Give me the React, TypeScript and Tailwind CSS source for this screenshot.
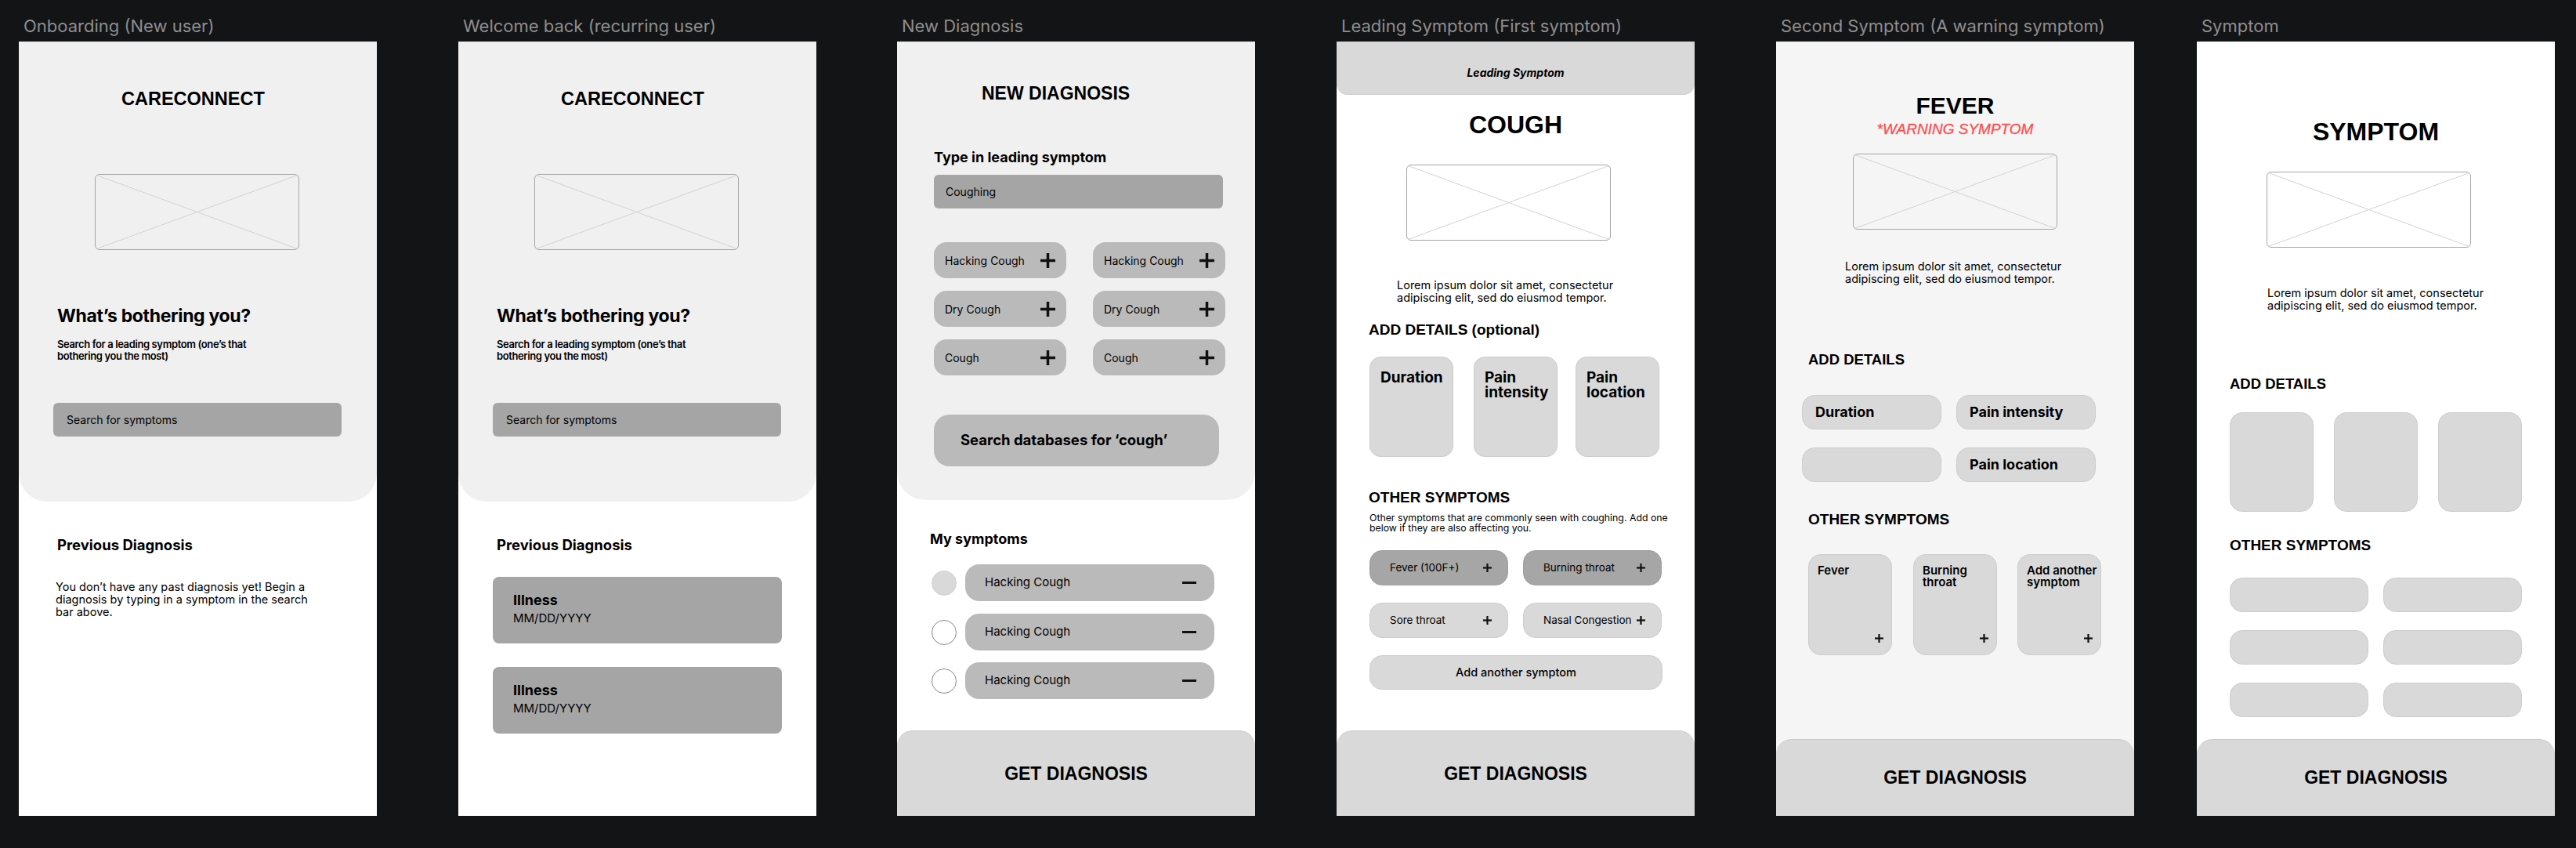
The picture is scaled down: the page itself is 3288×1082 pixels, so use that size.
import React from "react";

function Placeholder() {
  return (
    <div className="w-[261px] h-[97px] rounded-[6px] border border-[#a6a6a6] overflow-hidden">
      <svg className="block w-full h-full" viewBox="0 0 100 100" preserveAspectRatio="none">
        <line x1="0" y1="0" x2="100" y2="100" stroke="#d2d2d2" strokeWidth="1" vectorEffect="non-scaling-stroke" />
        <line x1="100" y1="0" x2="0" y2="100" stroke="#d2d2d2" strokeWidth="1" vectorEffect="non-scaling-stroke" />
      </svg>
    </div>
  );
}

function BigPlus() {
  return (
    <svg width="19" height="19" viewBox="0 0 19 19" className="shrink-0">
      <rect x="7.75" y="0" width="3.5" height="19" fill="#111" />
      <rect x="0" y="7.75" width="19" height="3.5" fill="#111" />
    </svg>
  );
}

function SmallPlus() {
  return (
    <svg width="11" height="11" viewBox="0 0 11 11" className="shrink-0">
      <rect x="4.4" y="0" width="2.2" height="11" fill="#111" />
      <rect x="0" y="4.4" width="11" height="2.2" fill="#111" />
    </svg>
  );
}

function Minus() {
  return (
    <svg width="18" height="3" viewBox="0 0 18 3" className="shrink-0">
      <rect x="0" y="0" width="18" height="3" fill="#111" />
    </svg>
  );
}

function Column({ label, ml, children }: { label: string; ml: string; children: React.ReactNode }) {
  return (
    <div className={"flex flex-col w-[457px] shrink-0 " + ml}>
      <div className="h-[31px] pl-[6px] text-[22px] leading-[23px] text-[#8e8e8e] whitespace-nowrap">{label}</div>
      {children}
    </div>
  );
}

function GetDiagnosis({ h }: { h: string }) {
  return (
    <div className={"mt-auto w-full rounded-t-[20px] bg-[#d9d9d9] border-t border-[#c9c9c9] flex items-center justify-center font-['Liberation_Sans',Arial,sans-serif] font-bold text-[23px] leading-none text-black " + h}>
      GET DIAGNOSIS
    </div>
  );
}

function HomeTop() {
  return (
    <div className="h-[587px] shrink-0 bg-[#f0f0f0] rounded-b-[36px] flex flex-col">
      <div className="mt-[62px] pl-[131px] font-['Liberation_Sans',Arial,sans-serif] font-bold text-[23.5px] leading-none text-black">CARECONNECT</div>
      <div className="mt-[83px] ml-[97px]">
        <Placeholder />
      </div>
      <div className="mt-[73px] ml-[49px] text-[23px] leading-none font-bold tracking-[-0.015em] text-black">What’s bothering you?</div>
      <div className="mt-[17px] ml-[49px] text-[13px] leading-[15px] font-semibold tracking-[-0.03em] text-black whitespace-nowrap">
        Search for a leading symptom (one’s that
        <br />
        bothering you the most)
      </div>
      <div className="mt-[52px] ml-[44px] w-[368px] h-[43px] rounded-[6px] bg-[#a5a5a5] flex items-center pl-[17px] text-[14px] text-black">Search for symptoms</div>
    </div>
  );
}

function Frame1() {
  return (
    <div className="w-[457px] h-[988px] bg-white flex flex-col">
      <HomeTop />
      <div className="mt-[46px] ml-[49px] text-[18.5px] leading-none font-bold text-black">Previous Diagnosis</div>
      <div className="mt-[36px] ml-[47px] text-[14.5px] leading-[16px] text-black whitespace-nowrap">
        You don’t have any past diagnosis yet! Begin a
        <br />
        diagnosis by typing in a symptom in the search
        <br />
        bar above.
      </div>
    </div>
  );
}

function IllnessCard({ mt }: { mt: string }) {
  return (
    <div className={"ml-[44px] w-[369px] h-[85px] rounded-[8px] bg-[#a5a5a5] flex flex-col pl-[26px] pt-[21px] " + mt}>
      <div className="text-[18px] leading-none font-bold text-black">Illness</div>
      <div className="mt-[6px] text-[15px] leading-none text-black">MM/DD/YYYY</div>
    </div>
  );
}

function Frame2() {
  return (
    <div className="w-[457px] h-[988px] bg-white flex flex-col">
      <HomeTop />
      <div className="mt-[46px] ml-[49px] text-[18.5px] leading-none font-bold text-black">Previous Diagnosis</div>
      <IllnessCard mt="mt-[31px]" />
      <IllnessCard mt="mt-[30px]" />
    </div>
  );
}

function Chip({ label }: { label: string }) {
  return (
    <div className="w-[169px] h-[46px] rounded-[16px] bg-[#bababa] flex items-center justify-between pl-[14px] pr-[14px] text-[14px] text-black">
      <span>{label}</span>
      <BigPlus />
    </div>
  );
}

function SymptomRow({ filled, mt }: { filled: boolean; mt: string }) {
  return (
    <div className={"flex items-center ml-[44px] " + mt}>
      <div className={filled ? "w-[32px] h-[32px] rounded-full bg-[#d9d9d9] border border-[#d0d0d0]" : "w-[32px] h-[32px] rounded-full bg-white border border-[#8a8a8a]"} />
      <div className="ml-[11px] w-[318px] h-[47px] rounded-[18px] bg-[#bababa] flex items-center justify-between pl-[25px] pr-[23px] text-[15px] text-black">
        <span>Hacking Cough</span>
        <Minus />
      </div>
    </div>
  );
}

function Frame3() {
  return (
    <div className="w-[457px] h-[988px] bg-white flex flex-col">
      <div className="h-[585px] shrink-0 bg-[#f0f0f0] rounded-b-[36px] flex flex-col">
        <div className="mt-[55px] pl-[108px] font-['Liberation_Sans',Arial,sans-serif] font-bold text-[23px] leading-none text-black">NEW DIAGNOSIS</div>
        <div className="mt-[61px] ml-[47px] text-[18px] leading-none font-bold text-black">Type in leading symptom</div>
        <div className="mt-[13px] ml-[47px] w-[369px] h-[43px] rounded-[6px] bg-[#a5a5a5] flex items-center pl-[15px] text-[14px] text-black">Coughing</div>
        <div className="mt-[43px] ml-[47px] flex flex-col gap-[16px]">
          <div className="flex gap-[34px]">
            <Chip label="Hacking Cough" />
            <Chip label="Hacking Cough" />
          </div>
          <div className="flex gap-[34px]">
            <Chip label="Dry Cough" />
            <Chip label="Dry Cough" />
          </div>
          <div className="flex gap-[34px]">
            <Chip label="Cough" />
            <Chip label="Cough" />
          </div>
        </div>
        <div className="mt-[50px] ml-[47px] w-[364px] h-[66px] rounded-[20px] bg-[#bababa] flex items-center pl-[34px] text-[18.5px] font-bold text-black">Search databases for ‘cough’</div>
      </div>
      <div className="mt-[41px] ml-[42px] text-[18px] leading-none font-bold text-black">My symptoms</div>
      <SymptomRow filled mt="mt-[23px]" />
      <SymptomRow filled={false} mt="mt-[16px]" />
      <SymptomRow filled={false} mt="mt-[15px]" />
      <GetDiagnosis h="h-[109px]" />
    </div>
  );
}

function DetailCard({ text, ml }: { text: React.ReactNode; ml: string }) {
  return (
    <div className={"w-[107px] h-[128px] rounded-[14px] bg-[#d9d9d9] border border-[#cdcdcd] pl-[13px] pt-[16px] text-[19px] leading-[19px] font-bold text-black " + ml}>{text}</div>
  );
}

function OtherChip({ label, dark }: { label: string; dark: boolean }) {
  return (
    <div className={dark ? "w-[177px] h-[45px] rounded-[16px] bg-[#a6a6a6] border border-[#9e9e9e] flex items-center justify-between pl-[25px] pr-[20px] text-[13.5px] text-black" : "w-[177px] h-[45px] rounded-[16px] bg-[#d9d9d9] border border-[#cdcdcd] flex items-center justify-between pl-[25px] pr-[20px] text-[13.5px] text-black"}>
      <span className="whitespace-nowrap">{label}</span>
      <SmallPlus />
    </div>
  );
}

function Frame4() {
  return (
    <div className="w-[457px] h-[988px] bg-white flex flex-col">
      <div className="h-[68px] shrink-0 bg-[#d9d9d9] rounded-b-[14px] border-b border-[#cdcdcd] flex items-center justify-center pt-[12px] text-[14px] font-bold italic text-black">Leading Symptom</div>
      <div className="mt-[22px] text-center font-['Liberation_Sans',Arial,sans-serif] font-bold text-[32px] leading-none text-black">COUGH</div>
      <div className="mt-[35px] ml-[89px]">
        <Placeholder />
      </div>
      <div className="mt-[49px] ml-[77px] text-[14.5px] leading-[16px] text-black whitespace-nowrap">
        Lorem ipsum dolor sit amet, consectetur
        <br />
        adipiscing elit, sed do eiusmod tempor.
      </div>
      <div className="mt-[23px] ml-[41px] font-['Liberation_Sans',Arial,sans-serif] font-bold text-[19px] leading-none text-black">ADD DETAILS (optional)</div>
      <div className="mt-[25px] ml-[42px] flex">
        <DetailCard text="Duration" ml="" />
        <DetailCard text={<>Pain<br />intensity</>} ml="ml-[26px]" />
        <DetailCard text={<>Pain<br />location</>} ml="ml-[23px]" />
      </div>
      <div className="mt-[42px] ml-[41px] font-['Liberation_Sans',Arial,sans-serif] font-bold text-[19px] leading-none text-black">OTHER SYMPTOMS</div>
      <div className="mt-[10px] ml-[42px] text-[12.3px] leading-[13px] text-black whitespace-nowrap">
        Other symptoms that are commonly seen with coughing. Add one
        <br />
        below if they are also affecting you.
      </div>
      <div className="mt-[22px] ml-[42px] flex flex-col gap-[22px]">
        <div className="flex gap-[19px]">
          <OtherChip label="Fever (100F+)" dark />
          <OtherChip label="Burning throat" dark />
        </div>
        <div className="flex gap-[19px]">
          <OtherChip label="Sore throat" dark={false} />
          <OtherChip label="Nasal Congestion" dark={false} />
        </div>
        <div className="w-[374px] h-[44px] rounded-[16px] bg-[#d9d9d9] border border-[#cdcdcd] flex items-center justify-center text-[14.5px] font-medium text-black">Add another symptom</div>
      </div>
      <GetDiagnosis h="h-[109px]" />
    </div>
  );
}

function DetailPill({ label }: { label: string }) {
  return (
    <div className="w-[178px] h-[44px] rounded-[16px] bg-[#d9d9d9] border border-[#cdcdcd] flex items-center pl-[16px] text-[18px] font-bold text-black whitespace-nowrap">{label}</div>
  );
}

function SymCard({ text, ml }: { text: React.ReactNode; ml: string }) {
  return (
    <div className={"w-[107px] h-[129px] rounded-[16px] bg-[#d9d9d9] border border-[#cdcdcd] flex flex-col justify-between pl-[11px] pt-[12px] pr-[10px] pb-[15px] " + ml}>
      <div className="text-[15px] leading-[15px] font-semibold text-black whitespace-nowrap">{text}</div>
      <div className="self-end">
        <SmallPlus />
      </div>
    </div>
  );
}

function Frame5() {
  return (
    <div className="w-[457px] h-[988px] bg-[#f5f5f5] flex flex-col">
      <div className="mt-[67px] text-center font-['Liberation_Sans',Arial,sans-serif] font-bold text-[30px] leading-none text-black">FEVER</div>
      <div className="mt-[5px] text-center font-['Liberation_Sans',Arial,sans-serif] italic text-[19px] leading-none text-[#ff4d4f] [-webkit-text-stroke:0.3px_#ff4d4f]">*WARNING SYMPTOM</div>
      <div className="mt-[22px] ml-[98px]">
        <Placeholder />
      </div>
      <div className="mt-[39px] ml-[88px] text-[14.5px] leading-[16px] text-black whitespace-nowrap">
        Lorem ipsum dolor sit amet, consectetur
        <br />
        adipiscing elit, sed do eiusmod tempor.
      </div>
      <div className="mt-[86px] ml-[41px] font-['Liberation_Sans',Arial,sans-serif] font-bold text-[18.5px] leading-none text-black">ADD DETAILS</div>
      <div className="mt-[35px] ml-[33px] flex flex-col gap-[23px]">
        <div className="flex gap-[19px]">
          <DetailPill label="Duration" />
          <DetailPill label="Pain intensity" />
        </div>
        <div className="flex gap-[19px]">
          <DetailPill label="" />
          <DetailPill label="Pain location" />
        </div>
      </div>
      <div className="mt-[38px] ml-[41px] font-['Liberation_Sans',Arial,sans-serif] font-bold text-[19px] leading-none text-black">OTHER SYMPTOMS</div>
      <div className="mt-[35px] ml-[41px] flex">
        <SymCard text="Fever" ml="" />
        <SymCard text={<>Burning<br />throat</>} ml="ml-[27px]" />
        <SymCard text={<>Add another<br />symptom</>} ml="ml-[26px]" />
      </div>
      <GetDiagnosis h="h-[98px]" />
    </div>
  );
}

function Frame6() {
  const blank = "w-[107px] h-[127px] rounded-[16px] bg-[#d9d9d9] border border-[#cdcdcd]";
  const pill = "w-[177px] h-[44px] rounded-[16px] bg-[#d9d9d9] border border-[#cdcdcd]";
  return (
    <div className="w-[457px] h-[988px] bg-white flex flex-col">
      <div className="mt-[99px] text-center font-['Liberation_Sans',Arial,sans-serif] font-bold text-[32px] leading-none text-black">SYMPTOM</div>
      <div className="mt-[35px] ml-[89px]">
        <Placeholder />
      </div>
      <div className="mt-[50px] ml-[90px] text-[14.5px] leading-[16px] text-black whitespace-nowrap">
        Lorem ipsum dolor sit amet, consectetur
        <br />
        adipiscing elit, sed do eiusmod tempor.
      </div>
      <div className="mt-[83px] ml-[42px] font-['Liberation_Sans',Arial,sans-serif] font-bold text-[18.5px] leading-none text-black">ADD DETAILS</div>
      <div className="mt-[26px] ml-[42px] flex gap-[26px]">
        <div className={blank} />
        <div className={blank} />
        <div className={blank} />
      </div>
      <div className="mt-[33px] ml-[42px] font-['Liberation_Sans',Arial,sans-serif] font-bold text-[19px] leading-none text-black">OTHER SYMPTOMS</div>
      <div className="mt-[32px] ml-[42px] flex flex-col gap-[23px]">
        <div className="flex gap-[19px]">
          <div className={pill} />
          <div className={pill} />
        </div>
        <div className="flex gap-[19px]">
          <div className={pill} />
          <div className={pill} />
        </div>
        <div className="flex gap-[19px]">
          <div className={pill} />
          <div className={pill} />
        </div>
      </div>
      <GetDiagnosis h="h-[98px]" />
    </div>
  );
}

export default function App() {
  return (
    <div className="w-[3288px] h-[1082px] bg-[#131416] flex items-start pt-[22px] pl-[24px] font-['Inter',sans-serif] overflow-hidden">
      <Column label="Onboarding (New user)" ml="">
        <Frame1 />
      </Column>
      <Column label="Welcome back (recurring user)" ml="ml-[104px]">
        <Frame2 />
      </Column>
      <Column label="New Diagnosis" ml="ml-[103px]">
        <Frame3 />
      </Column>
      <Column label="Leading Symptom (First symptom)" ml="ml-[104px]">
        <Frame4 />
      </Column>
      <Column label="Second Symptom (A warning symptom)" ml="ml-[104px]">
        <Frame5 />
      </Column>
      <Column label="Symptom" ml="ml-[80px]">
        <Frame6 />
      </Column>
    </div>
  );
}
